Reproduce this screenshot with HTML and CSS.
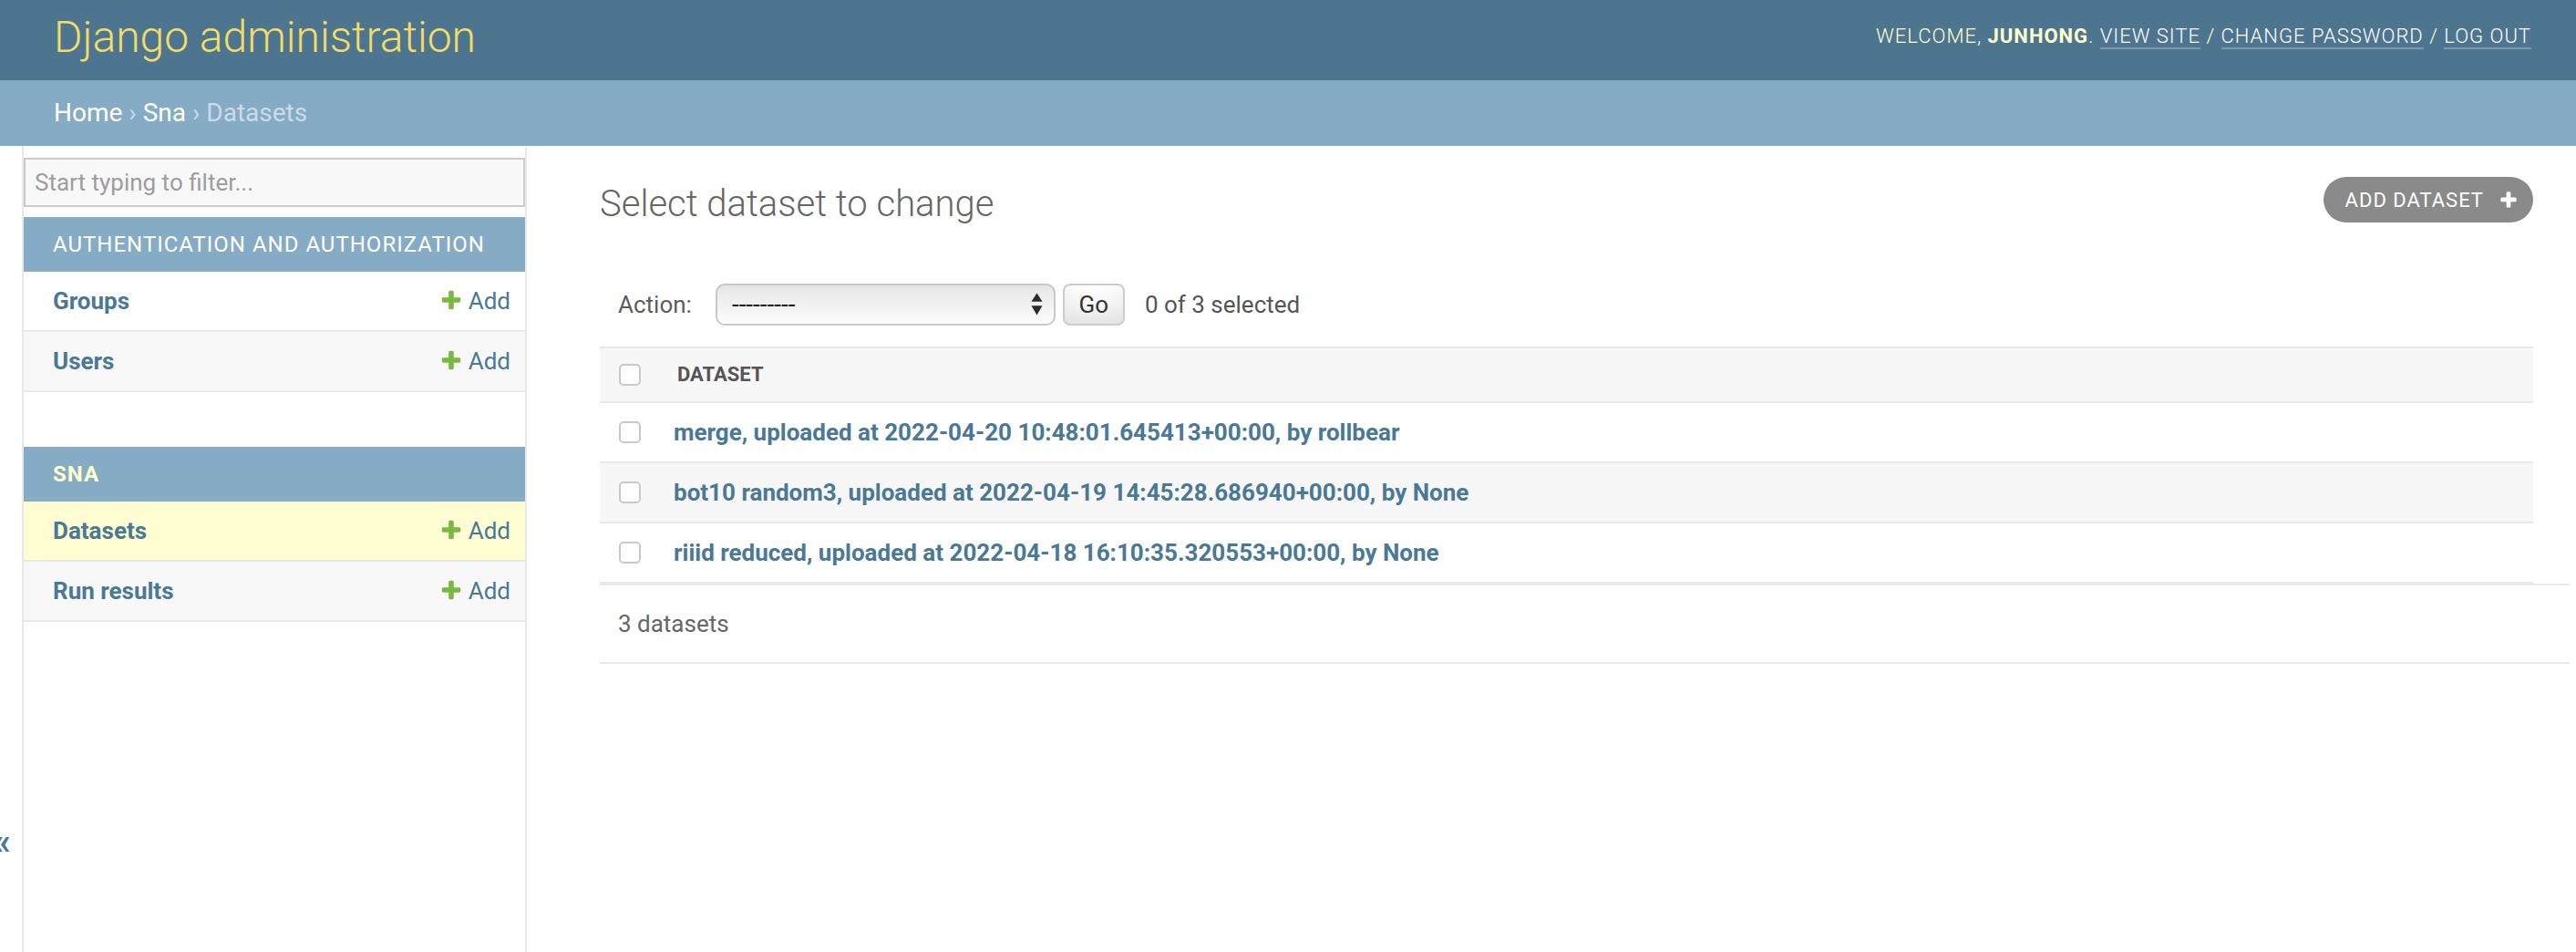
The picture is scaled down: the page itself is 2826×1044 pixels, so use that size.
FILE: index.html
```html
<!DOCTYPE html>
<html lang="en">
<head>
<meta charset="utf-8">
<title>Select dataset to change | Django site admin</title>
<link rel="stylesheet" href="styles.css">
</head>
<body>
<div class="container">
  <header class="header">
    <div class="branding"><h1 class="site-name"><a href="#">Django administration</a></h1></div>
    <div class="user-tools">Welcome, <strong>junhong</strong>. <a href="#">View site</a> / <a href="#">Change password</a> / <a href="#">Log out</a></div>
  </header>
  <nav class="breadcrumbs"><a href="#">Home</a> › <a href="#">Sna</a> › Datasets</nav>
  <div class="main">
    <button class="toggle-nav" type="button"><span class="toggle-glyph">«</span></button>
    <nav class="sidebar">
      <input class="nav-filter" type="search" placeholder="Start typing to filter...">
      <div class="module">
        <table>
          <caption>Authentication and Authorization</caption>
          <tr>
            <th><a href="#">Groups</a></th>
            <td><a href="#" class="addlink"><svg viewBox="0 0 1792 1792"><path fill="#7bb843" d="M1600 796v192q0 40-28 68t-68 28h-416v416q0 40-28 68t-68 28h-192q-40 0-68-28t-28-68v-416h-416q-40 0-68-28t-28-68v-192q0-40 28-68t68-28h416v-416q0-40 28-68t68-28h192q40 0 68 28t28 68v416h416q40 0 68 28t28 68z"/></svg>Add</a></td>
          </tr>
          <tr>
            <th><a href="#">Users</a></th>
            <td><a href="#" class="addlink"><svg viewBox="0 0 1792 1792"><path fill="#7bb843" d="M1600 796v192q0 40-28 68t-68 28h-416v416q0 40-28 68t-68 28h-192q-40 0-68-28t-28-68v-416h-416q-40 0-68-28t-28-68v-192q0-40 28-68t68-28h416v-416q0-40 28-68t68-28h192q40 0 68 28t28 68v416h416q40 0 68 28t28 68z"/></svg>Add</a></td>
          </tr>
        </table>
      </div>
      <div class="module current-app">
        <table>
          <caption>Sna</caption>
          <tr class="current-model">
            <th><a href="#">Datasets</a></th>
            <td><a href="#" class="addlink"><svg viewBox="0 0 1792 1792"><path fill="#7bb843" d="M1600 796v192q0 40-28 68t-68 28h-416v416q0 40-28 68t-68 28h-192q-40 0-68-28t-28-68v-416h-416q-40 0-68-28t-28-68v-192q0-40 28-68t68-28h416v-416q0-40 28-68t68-28h192q40 0 68 28t28 68v416h416q40 0 68 28t28 68z"/></svg>Add</a></td>
          </tr>
          <tr>
            <th><a href="#">Run results</a></th>
            <td><a href="#" class="addlink"><svg viewBox="0 0 1792 1792"><path fill="#7bb843" d="M1600 796v192q0 40-28 68t-68 28h-416v416q0 40-28 68t-68 28h-192q-40 0-68-28t-28-68v-416h-416q-40 0-68-28t-28-68v-192q0-40 28-68t68-28h416v-416q0-40 28-68t68-28h192q40 0 68 28t28 68v416h416q40 0 68 28t28 68z"/></svg>Add</a></td>
          </tr>
        </table>
      </div>
    </nav>
    <main class="content">
      <div class="content-head">
        <h1>Select dataset to change</h1>
        <a href="#" class="add-btn">Add dataset<svg viewBox="0 0 1792 1792"><path fill="#ffffff" d="M1600 796v192q0 40-28 68t-68 28h-416v416q0 40-28 68t-68 28h-192q-40 0-68-28t-28-68v-416h-416q-40 0-68-28t-28-68v-192q0-40 28-68t68-28h416v-416q0-40 28-68t68-28h192q40 0 68 28t28 68v416h416q40 0 68 28t28 68z"/></svg></a>
      </div>
      <form class="changelist">
        <div class="actions">
          <label class="action-label">Action:</label>
          <span class="select-wrap">
            <select class="action-select">
              <option>---------</option>
              <option>Delete selected datasets</option>
            </select>
            <svg class="select-arrows" viewBox="0 0 14 26"><path d="M7 0L13.5 10H0.5Z M7 26L13.5 15H0.5Z" fill="#2b2b2b"/></svg>
          </span>
          <button type="button" class="go-btn">Go</button>
          <span class="action-counter">0 of 3 selected</span>
        </div>
        <table class="results">
          <thead>
            <tr>
              <th class="cb-col"><input type="checkbox" class="cb"></th>
              <th class="col-name">Dataset</th>
            </tr>
          </thead>
          <tbody>
            <tr>
              <td class="cb-col"><input type="checkbox" class="cb"></td>
              <th><a href="#">merge, uploaded at 2022-04-20 10:48:01.645413+00:00, by rollbear</a></th>
            </tr>
            <tr>
              <td class="cb-col"><input type="checkbox" class="cb"></td>
              <th><a href="#">bot10 random3, uploaded at 2022-04-19 14:45:28.686940+00:00, by None</a></th>
            </tr>
            <tr>
              <td class="cb-col"><input type="checkbox" class="cb"></td>
              <th><a href="#">riiid reduced, uploaded at 2022-04-18 16:10:35.320553+00:00, by None</a></th>
            </tr>
          </tbody>
        </table>
        <p class="paginator">3 datasets</p>
      </form>
    </main>
  </div>
</div>
</body>
</html>
```
FILE: styles.css
```css
* { box-sizing: border-box; }
html, body { margin: 0; padding: 0; height: 100%; }
body {
  font-family: Roboto, "Liberation Sans", Arial, sans-serif;
  font-size: 28px;
  color: #333;
  background: #fff;
  overflow: hidden;
}
a { text-decoration: none; color: #4a7995; }

.container { display: flex; flex-direction: column; height: 100vh; }

/* header */
.header {
  flex: none;
  display: flex;
  justify-content: space-between;
  align-items: center;
  height: 88px;
  padding: 0 49px 0 59px;
  background: #4e7590;
}
.site-name {
  margin: 0 0 7px 0;
  font-size: 48px;
  font-weight: 300;
  line-height: 48px;
}
.site-name a { color: #f3dc66; }
.user-tools {
  margin-bottom: 9px;
  font-size: 22px;
  font-weight: 300;
  line-height: 26px;
  letter-spacing: 1px;
  text-transform: uppercase;
  color: #ffffcc;
}
.user-tools strong { font-weight: 700; }
.user-tools a { color: #fff; border-bottom: 2px solid rgba(255, 255, 255, 0.25); }

/* breadcrumbs */
.breadcrumbs {
  flex: none;
  height: 72px;
  padding: 20px 59px;
  background: #85abc5;
  color: #c9dce7;
  font-size: 28px;
  line-height: 32px;
}
.breadcrumbs a { color: #fff; }

/* main */
.main { flex: 1; display: flex; min-height: 0; }

.toggle-nav {
  flex: 0 0 26px;
  width: 26px;
  margin: 0;
  padding: 740px 0 0 0;
  border: 0;
  border-right: 2px solid #e8e8e8;
  background: #fff;
  overflow: hidden;
  display: flex;
  align-items: flex-start;
  font-family: inherit;
}
.toggle-glyph {
  flex: 0 0 44px;
  margin-left: -20px;
  text-align: center;
  font-size: 40px;
  line-height: 48px;
  font-weight: 700;
  color: #4a7995;
}

.sidebar {
  flex: 0 0 552px;
  border-top: 2px solid transparent;
  border-right: 2px solid #e8e8e8;
  background: #fff;
}
.nav-filter {
  display: block;
  width: 100%;
  height: 54px;
  margin: 11px 0;
  padding: 4px 10px;
  border: 2px solid #cccccc;
  border-radius: 0;
  background: #f8f8f8;
  font-family: Roboto, "Liberation Sans", Arial, sans-serif;
  font-size: 26px;
  color: #333;
  outline: none;
}
.nav-filter::placeholder { color: #9d9d9d; }

.module { margin-bottom: 60px; }
.module table { width: 100%; border-collapse: collapse; }
.module caption {
  text-align: left;
  padding: 16px 16px 16px 32px;
  font-size: 24px;
  line-height: 28px;
  letter-spacing: 1px;
  text-transform: uppercase;
  font-weight: 400;
  background: #85abc5;
  color: #fff;
}
.current-app caption { font-weight: 700; color: #ffffcc; }
.module th, .module td {
  padding: 16px;
  font-size: 26px;
  line-height: 32px;
  border-bottom: 2px solid #e8e8e8;
  vertical-align: top;
}
.module th { width: 100%; text-align: left; padding-left: 32px; font-weight: 700; }
.module td { white-space: nowrap; }
.module tr:nth-child(even) { background: #f8f8f8; }
.module tr.current-model { background: #fffdd1; }

.addlink { display: flex; align-items: flex-start; gap: 6px; font-weight: 400; }
.addlink svg { width: 26px; height: 26px; margin-top: 2px; flex: none; }

/* content */
.content { flex: 1; min-width: 0; padding: 40px 47px 40px 80px; }
.content-head {
  display: flex;
  justify-content: space-between;
  align-items: flex-start;
  margin-bottom: 40px;
}
.content-head h1 {
  margin: 0;
  font-size: 40px;
  font-weight: 300;
  line-height: 47px;
  color: #666;
}
.add-btn {
  display: flex;
  align-items: center;
  height: 50px;
  margin-top: -6px;
  margin-bottom: -6px;
  padding: 0 16px 0 24px;
  border-radius: 30px;
  background: #8a8a8a;
  color: #fff;
  font-size: 22px;
  letter-spacing: 1px;
  text-transform: uppercase;
}
.add-btn svg { width: 22px; height: 22px; margin-left: 16px; }

.actions {
  display: flex;
  align-items: center;
  height: 93px;
  padding: 0 20px;
  font-size: 26px;
  color: #5c5c5c;
}
.select-wrap { position: relative; display: inline-block; margin-left: 26px; }
.action-select {
  display: block;
  width: 373px;
  height: 46px;
  margin: 0;
  padding: 0 0 0 16px;
  border: 2px solid #c8c8c8;
  border-radius: 10px;
  background: linear-gradient(#e6e6e6, #fdfdfd);
  -webkit-appearance: none;
  appearance: none;
  font-family: Roboto, "Liberation Sans", Arial, sans-serif;
  font-size: 28px;
  color: #222;
}
.select-arrows {
  position: absolute;
  top: 10px;
  right: 14px;
  width: 13px;
  height: 25px;
  pointer-events: none;
}
.go-btn {
  width: 68px;
  height: 46px;
  margin: 0 0 0 8px;
  padding: 0;
  border: 2px solid #cccccc;
  border-radius: 8px;
  background: #fff;
  box-shadow: inset 0 -30px 40px -20px rgba(0, 0, 0, 0.15);
  font-family: Roboto, "Liberation Sans", Arial, sans-serif;
  font-size: 26px;
  color: #333;
}
.action-counter { margin-left: 22px; color: #555; }

.results { width: 100%; border-collapse: collapse; }
.results thead th {
  background: #f7f7f7;
  border-top: 2px solid #e8e8e8;
  border-bottom: 2px solid #e8e8e8;
  padding: 16px 20px;
  font-size: 22px;
  line-height: 26px;
  font-weight: 700;
  color: #555;
  text-align: left;
  text-transform: uppercase;
  vertical-align: middle;
}
.results tbody th, .results tbody td {
  padding: 16px;
  font-size: 26px;
  line-height: 32px;
  font-weight: 700;
  border-bottom: 2px solid #e8e8e8;
  vertical-align: top;
  text-align: left;
}
.results tbody tr:nth-child(even) { background: #f7f7f7; }
.results .cb-col { width: 65px; padding-left: 0; padding-right: 0; text-align: center; }
.results thead th.cb-col { padding: 0; }
.cb {
  display: block;
  width: 24px;
  height: 24px;
  margin: 0 auto;
  border: 2px solid #c9c9c9;
  border-radius: 5px;
  background: #fff;
  -webkit-appearance: none;
  appearance: none;
}
.results tbody .cb { margin-top: 4px; }

.paginator {
  width: calc(100% + 40px);
  margin: 0;
  padding: 20px;
  font-size: 26px;
  line-height: 44px;
  color: #666;
  border-top: 2px solid #e8e8e8;
  border-bottom: 2px solid #e8e8e8;
}
```
